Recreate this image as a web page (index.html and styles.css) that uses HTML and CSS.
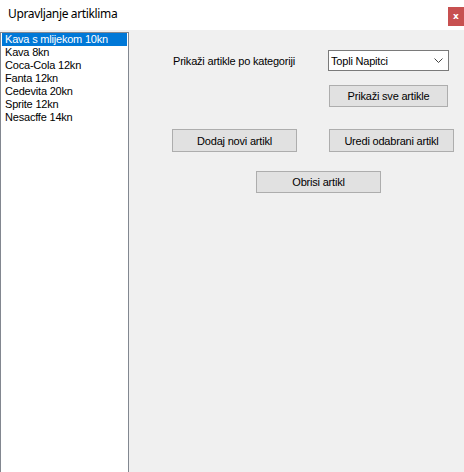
FILE: index.html
```html
<!DOCTYPE html>
<html>
<head>
<meta charset="utf-8">
<link rel="stylesheet" href="styles.css">
</head>
<body>
<div class="window">
  <div class="titlebar">
    <span class="title">Upravljanje artiklima</span>
    <span class="close">x</span>
  </div>
  <div class="content">
    <div class="listbox">
      <div class="item selected">Kava s mlijekom 10kn</div>
      <div class="item">Kava 8kn</div>
      <div class="item">Coca-Cola 12kn</div>
      <div class="item">Fanta 12kn</div>
      <div class="item">Cedevita 20kn</div>
      <div class="item">Sprite 12kn</div>
      <div class="item">Nesacffe 14kn</div>
    </div>
    <div class="panel">
      <div class="row row1">
        <span class="label">Prikaži artikle po kategoriji</span>
        <div class="combo">
          <span>Topli Napitci</span>
          <svg class="chev" width="9" height="5" viewBox="0 0 9 5"><path d="M0.5 0.5 L4.5 4.5 L8.5 0.5" fill="none" stroke="#444" stroke-width="1"/></svg>
        </div>
      </div>
      <div class="row row2">
        <div class="btn w119">Prikaži sve artikle</div>
      </div>
      <div class="row row3">
        <div class="btn w125 dodaj">Dodaj novi artikl</div>
        <div class="btn w125 uredi">Uredi odabrani artikl</div>
      </div>
      <div class="row row4">
        <div class="btn w125 obrisi">Obrisi artikl</div>
      </div>
    </div>
  </div>
</div>
</body>
</html>
```
FILE: styles.css
```css
html, body {
  margin: 0;
  padding: 0;
  width: 464px;
  height: 472px;
  overflow: hidden;
  background: #f0f0f0;
}
.window {
  width: 464px;
  height: 472px;
  display: flex;
  flex-direction: column;
  font-family: "Liberation Sans", Arial, sans-serif;
  font-size: 11px;
  letter-spacing: -0.2px;
  color: #000;
}
.titlebar {
  height: 30px;
  background: #fff;
  display: flex;
  align-items: flex-start;
  justify-content: space-between;
  flex-shrink: 0;
}
.title {
  font-family: "Noto Sans", "Open Sans", sans-serif;
  font-size: 12px;
  letter-spacing: -0.35px;
  margin-left: 8px;
  margin-top: 5px;
  line-height: 17px;
}
.close {
  width: 16px;
  height: 19px;
  margin-top: 7px;
  background: #c75050;
  color: #fff;
  font-family: "DejaVu Sans", sans-serif;
  font-weight: bold;
  font-size: 9px;
  letter-spacing: 0;
  line-height: 19px;
  text-align: center;
}
.content {
  flex: 1;
  display: flex;
  padding-top: 2px;
  min-height: 0;
}
.listbox {
  width: 127px;
  border: 1px solid #828790;
  border-bottom: none;
  background: #fff;
  display: flex;
  flex-direction: column;
}
.item {
  height: 13px;
  line-height: 13px;
  padding-left: 3px;
  margin: 0 1px;
  white-space: nowrap;
}
.item.selected {
  background: #0078d7;
  color: #fff;
}
.panel {
  flex: 1;
  display: flex;
  flex-direction: column;
  padding-top: 18px;
}
.row {
  display: flex;
  align-items: center;
}
.row1 {
  height: 21px;
  padding-left: 44px;
}
.label {
  width: 155px;
}
.combo {
  box-sizing: border-box;
  width: 121px;
  height: 21px;
  border: 1px solid #7a7a7a;
  background: #fff;
  display: flex;
  align-items: center;
  justify-content: space-between;
  padding-left: 2px;
  padding-right: 5px;
}
.chev {
  display: block;
}
.btn {
  box-sizing: border-box;
  height: 22px;
  background: #e1e1e1;
  border: 1px solid #adadad;
  display: flex;
  align-items: center;
  justify-content: center;
}
.w119 { width: 119px; }
.w125 { width: 125px; }
.row2 {
  margin-top: 14px;
  padding-left: 200px;
}
.row3 {
  margin-top: 22px;
  padding-left: 43px;
}
.row3 .btn { height: 23px; }
.uredi { margin-left: 32px; }
.row4 {
  margin-top: 19px;
  padding-left: 127px;
}
```
